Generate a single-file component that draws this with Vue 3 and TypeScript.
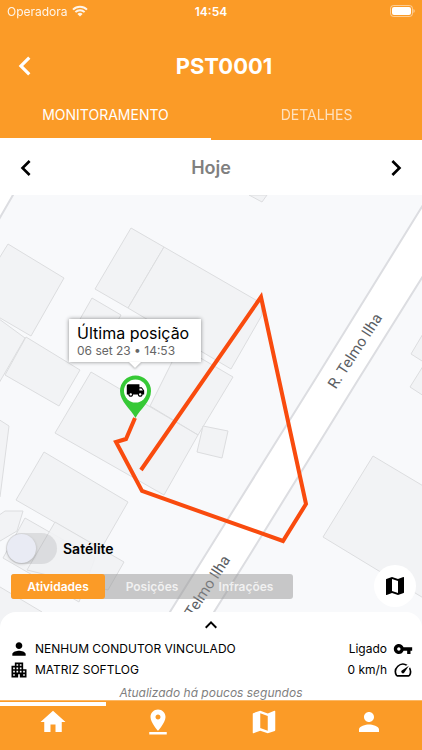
<script setup lang="ts">
import { ref } from 'vue'

const icons = {
  back: 'M15.41 7.41 14 6l-6 6 6 6 1.41-1.41L10.83 12z',
  forward: 'M10 6 8.59 7.41 13.17 12l-4.58 4.59L10 18l6-6z',
  up: 'm12 8-6 6 1.41 1.41L12 10.83l4.59 4.58L18 14z',
  person:
    'M12 12c2.21 0 4-1.79 4-4s-1.79-4-4-4-4 1.79-4 4 1.79 4 4 4zm0 2c-2.67 0-8 1.34-8 4v2h16v-2c0-2.66-5.33-4-8-4z',
  home: 'M10 20v-6h4v6h5v-8h3L12 3 2 12h3v8z',
  map: 'M15 19l-6-2.11V5l6 2.11M20.5 3h-.16L15 5.1 9 3 3.36 4.9c-.21.07-.36.25-.36.48V20.5a.5.5 0 0 0 .5.5c.05 0 .11 0 .16-.03L9 18.9l6 2.1 5.64-1.9c.21-.1.36-.25.36-.48V3.5a.5.5 0 0 0-.5-.5z',
  pin: 'M18 8c0-3.31-2.69-6-6-6S6 4.69 6 8c0 4.5 6 11 6 11s6-6.5 6-11zm-8 0c0-1.1.9-2 2-2s2 .9 2 2-.89 2-2 2c-1.1 0-2-.9-2-2zM5 20v2h14v-2H5z',
  building:
    'M17 11V3H7v4H3v14h8v-4h2v4h8V11h-4zM7 19H5v-2h2v2zm0-4H5v-2h2v2zm0-4H5V9h2v2zm4 4H9v-2h2v2zm0-4H9V9h2v2zm0-4H9V5h2v2zm4 8h-2v-2h2v2zm0-4h-2V9h2v2zm0-4h-2V5h2v2zm4 12h-2v-2h2v2zm0-4h-2v-2h2v2z',
  key: 'M12.65 10C11.83 7.67 9.61 6 7 6c-3.31 0-6 2.69-6 6s2.69 6 6 6c2.61 0 4.83-1.67 5.65-4H17v4h4v-4h2v-4H12.65zM7 14c-1.1 0-2-.9-2-2s.9-2 2-2 2 .9 2 2-.9 2-2 2z',
  speed:
    'M20.38 8.57l-1.23 1.85a8 8 0 0 1-.22 7.58H5.07A8 8 0 0 1 15.58 6.85l1.85-1.23A10 10 0 0 0 3.35 19a2 2 0 0 0 1.72 1h13.85a2 2 0 0 0 1.74-1 10 10 0 0 0-.27-10.44zm-9.79 6.84a2 2 0 0 0 2.83 0l5.66-8.49-8.49 5.66a2 2 0 0 0 0 2.83z',
  truck:
    'M20 8h-3V4H3c-1.1 0-2 .9-2 2v11h2c0 1.66 1.34 3 3 3s3-1.34 3-3h6c0 1.66 1.34 3 3 3s3-1.34 3-3h2v-5l-3-4zM6 18.5c-.83 0-1.5-.67-1.5-1.5s.67-1.5 1.5-1.5 1.5.67 1.5 1.5-.67 1.5-1.5 1.5zm13.5-9l1.96 2.5H17V9.5h2.5zm-1.5 9c-.83 0-1.5-.67-1.5-1.5s.67-1.5 1.5-1.5 1.5.67 1.5 1.5-.67 1.5-1.5 1.5z',
}

const tabs = ['MONITORAMENTO', 'DETALHES']
const activeTab = ref(0)

const filters = ['Atividades', 'Posições', 'Infrações']
const activeFilter = ref(0)

const satellite = ref(false)

const navItems = [
  { label: 'Início', icon: icons.home },
  { label: 'Posição', icon: icons.pin },
  { label: 'Mapa', icon: icons.map },
  { label: 'Perfil', icon: icons.person },
]
const activeNav = ref(0)

const buildings: string[] = [
  '249,195 262,202 267,195',
  '8,244 64,278 31,336 -5,315 -5,265',
  '131,228 164,247 128,308 95,289',
  '164,247 261,303 262,315 231,369 128,308',
  '92,298 121,315 100,352 71,335',
  '-5,316 25,338 -5,390',
  '26,337 80,370 59,406 5,375',
  '180,346 233,377 198,435 150,406',
  '91,372 198,435 164,495 55,433',
  '203,426 228,431 222,458 197,452',
  '-5,417 9,426 0,497 -5,500',
  '44,452 128,502 101,549 16,500',
  '5,511 23,511 17,531 -5,544 -5,518',
  '25,518 95,558 79,602 3,558',
  '55,522 124,562 108,590 27,570',
  '-5,584 42,612 60,640 -5,640',
  '373,456 430,490 430,602 323,537',
  '430,322 411,354 430,366',
  '430,355 410,387 430,400',
]
</script>

<template>
  <div class="screen">
    <header class="header">
      <div class="status">
        <div class="carrier">
          <span>Operadora</span>
          <svg class="wifi" viewBox="0 0 16 12" aria-hidden="true">
            <path d="M1 4.6a10 10 0 0 1 14 0M3.4 7.1a6.6 6.6 0 0 1 9.2 0" />
            <path class="wifi-dot" d="M8 11.6 5.4 9a3.7 3.7 0 0 1 5.2 0z" />
          </svg>
        </div>
        <time class="clock">14:54</time>
        <svg class="battery" viewBox="0 0 25 12" aria-hidden="true">
          <rect class="battery-case" x="0.5" y="0.5" width="22" height="11" rx="3" />
          <rect x="2" y="2" width="19" height="8" rx="2" />
          <path class="battery-cap" d="M23.500 4v4q1.200-.6 1.200-2t-1.200-2z" />
        </svg>
      </div>
      <div class="title-row">
        <button class="icon-button" type="button" aria-label="Voltar">
          <svg class="icon icon-xl" viewBox="0 0 24 24"><path :d="icons.back" /></svg>
        </button>
        <h1>PST0001</h1>
      </div>
      <nav class="tabs">
        <button
          v-for="(tab, i) in tabs"
          :key="tab"
          type="button"
          :class="{ active: i === activeTab }"
          @click="activeTab = i"
        >
          {{ tab }}
        </button>
      </nav>
    </header>

    <div class="date-bar">
      <button class="icon-button" type="button" aria-label="Dia anterior">
        <svg class="icon icon-lg" viewBox="0 0 24 24"><path :d="icons.back" /></svg>
      </button>
      <h2>Hoje</h2>
      <button class="icon-button" type="button" aria-label="Próximo dia">
        <svg class="icon icon-lg" viewBox="0 0 24 24"><path :d="icons.forward" /></svg>
      </button>
    </div>

    <main class="map">
      <svg class="canvas" viewBox="0 195 422 433" preserveAspectRatio="xMidYMid slice">
        <path class="road" d="M-10 235 13 195-10 175z" />
        <polygon v-for="points in buildings" :key="points" class="building" :points="points" />
        <path class="road" d="M428 197 316 378 211 546 155 636 199 636 251 553 358 380 428 268z" />
        <text class="street" transform="translate(355 351) rotate(-57)" dy="5">R. Telmo Ilha</text>
        <text class="street" transform="translate(203 593) rotate(-57)" dy="5">R. Telmo Ilha</text>
        <polyline
          class="route"
          points="135,418 126,439 116,442 142,491 283,541 306,504 261,297 141,470"
        />
        <path
          class="pin"
          d="M135.500 418C131 409 120 402 120 391a15.500 15.500 0 0 1 31 0C151 402 140 409 135.500 418z"
        />
        <circle class="pin-hole" cx="135.500" cy="391" r="11.500" />
        <path transform="translate(126 381) scale(.79)" :d="icons.truck" />
      </svg>

      <div class="callout">
        <strong>Última posição</strong>
        <span>06 set 23 • 14:53</span>
      </div>

      <div class="controls">
        <label class="satellite">
          <input v-model="satellite" type="checkbox" role="switch" />
          <span>Satélite</span>
        </label>
        <div class="filters">
          <button
            v-for="(filter, i) in filters"
            :key="filter"
            type="button"
            :class="{ active: i === activeFilter }"
            @click="activeFilter = i"
          >
            {{ filter }}
          </button>
        </div>
      </div>
      <button class="fab" type="button" aria-label="Tipo de mapa">
        <svg class="icon icon-md" viewBox="0 0 24 24"><path :d="icons.map" /></svg>
      </button>
    </main>

    <section class="sheet">
      <button class="expand" type="button" aria-label="Expandir">
        <svg class="icon icon-md" viewBox="0 0 24 24"><path :d="icons.up" /></svg>
      </button>
      <div class="info">
        <div class="entry">
          <svg class="icon icon-sm" viewBox="0 0 24 24"><path :d="icons.person" /></svg>
          <span>NENHUM CONDUTOR VINCULADO</span>
        </div>
        <div class="entry">
          <span>Ligado</span>
          <svg class="icon icon-sm" viewBox="0 0 24 24"><path :d="icons.key" /></svg>
        </div>
      </div>
      <div class="info">
        <div class="entry">
          <svg class="icon icon-sm" viewBox="0 0 24 24"><path :d="icons.building" /></svg>
          <span>MATRIZ SOFTLOG</span>
        </div>
        <div class="entry">
          <span>0 km/h</span>
          <svg class="icon icon-sm" viewBox="0 0 24 24"><path :d="icons.speed" /></svg>
        </div>
      </div>
      <p class="updated">Atualizado há poucos segundos</p>
    </section>

    <nav class="bottom-nav">
      <button
        v-for="(item, i) in navItems"
        :key="item.label"
        type="button"
        :aria-label="item.label"
        :class="{ active: i === activeNav }"
        @click="activeNav = i"
      >
        <svg class="icon icon-nav" viewBox="0 0 24 24"><path :d="item.icon" /></svg>
      </button>
    </nav>
  </div>
</template>

<style>
body {
  margin: 0;
}
</style>

<style scoped>
.screen {
  display: flex;
  flex-direction: column;
  min-height: 100vh;
  background: #fff;
  color: #000;
  font-family: Inter, "Liberation Sans", sans-serif;
}

button {
  margin: 0;
  padding: 0;
  border: 0;
  background: none;
  color: inherit;
  font: inherit;
  cursor: pointer;
}

h1,
h2,
p {
  margin: 0;
}

.icon {
  display: block;
  flex: none;
  fill: currentColor;
}
.icon-sm {
  width: 20px;
  height: 20px;
}
.icon-md {
  width: 24px;
  height: 24px;
}
.icon-nav {
  width: 30px;
  height: 30px;
}
.icon-lg {
  width: 32px;
  height: 32px;
}
.icon-xl {
  width: 38px;
  height: 38px;
}

.header {
  background: #fb9b27;
  color: #fff;
}

.status {
  display: grid;
  grid-template-columns: 1fr auto 1fr;
  align-items: center;
  height: 22px;
  padding: 0 7px;
  box-sizing: border-box;
  font-size: 12px;
}
.carrier {
  display: flex;
  align-items: center;
  gap: 4px;
  opacity: 0.9;
}
.wifi {
  width: 16px;
  height: 12px;
  fill: none;
  stroke: #fff;
  stroke-width: 2;
}
.wifi .wifi-dot {
  fill: #fff;
  stroke: none;
}
.clock {
  font-weight: 600;
}
.battery {
  justify-self: end;
  width: 25px;
  height: 12px;
  fill: #fff;
}
.battery-case {
  fill: none;
  stroke: #fff;
  opacity: 0.5;
}
.battery-cap {
  opacity: 0.6;
}

.title-row {
  display: grid;
  grid-template-columns: 38px 1fr 12px;
  align-items: center;
  height: 68px;
  padding: 20px 6px 0;
  box-sizing: border-box;
}
.title-row h1 {
  font-size: 22px;
  font-weight: 700;
  line-height: 28px;
  text-align: center;
}

.tabs {
  display: flex;
}
.tabs button {
  flex: 1;
  height: 50px;
  border-bottom: 2px solid transparent;
  font-size: 14px;
  opacity: 0.7;
}
.tabs .active {
  border-color: #fff;
  opacity: 1;
}

.date-bar {
  display: flex;
  align-items: center;
  justify-content: space-between;
  height: 55px;
  padding: 0 10px;
}
.date-bar h2 {
  color: #808080;
  font-size: 18px;
  font-weight: 600;
}

.map {
  position: relative;
  display: flex;
  flex: 1;
  align-items: flex-end;
  justify-content: space-between;
  min-height: 400px;
  padding: 0 6px 29px;
  box-sizing: border-box;
  background: #f8f9fb;
}
.canvas {
  position: absolute;
  inset: 0;
  width: 100%;
  height: 100%;
}
.building {
  fill: #f1f2f4;
  fill-opacity: 0.9;
  stroke: #dcdddf;
  stroke-width: 1;
}
.road {
  fill: #fff;
  stroke: #dcdde1;
  stroke-width: 2;
}
.street {
  fill: #5b5e63;
  stroke: #fff;
  stroke-width: 2;
  paint-order: stroke;
  font-family: Roboto, Inter, sans-serif;
  font-size: 15px;
  font-weight: 400;
  text-anchor: middle;
}
.route {
  fill: none;
  stroke: #f94b0e;
  stroke-width: 4;
}
.pin {
  fill: #36c936;
}
.pin-hole {
  fill: #fff;
}

.callout {
  position: absolute;
  bottom: calc(50% + 50px);
  left: calc(50% - 76px);
  display: flex;
  flex-direction: column;
  padding: 4px 8px;
  width: 116px;
  transform: translateX(-50%);
  background: #fff;
  box-shadow: 0 0 4px rgba(0, 0, 0, 0.45);
  white-space: nowrap;
}
.callout::after {
  content: "";
  position: absolute;
  top: 100%;
  left: 50%;
  margin-left: -6px;
  border: 6px solid transparent;
  border-top-color: #fff;
  border-bottom: 0;
  filter: drop-shadow(0 1px 1px rgba(0, 0, 0, 0.3));
}
.callout strong {
  font-size: 16px;
  font-weight: 400;
  line-height: 20px;
}
.callout span {
  color: #666;
  font-size: 12px;
  line-height: 15px;
}

.controls {
  position: relative;
  display: flex;
  flex-direction: column;
  gap: 10px;
}
.satellite {
  display: flex;
  align-items: center;
  gap: 6px;
  font-size: 14px;
  font-weight: 600;
}
.satellite input {
  width: 51px;
  height: 31px;
  margin: 0;
  padding: 1px;
  box-sizing: border-box;
  border-radius: 16px;
  appearance: none;
  background: rgba(120, 120, 128, 0.18);
}
.satellite input::before {
  content: "";
  display: block;
  width: 29px;
  height: 29px;
  border-radius: 50%;
  background: #e9ebf4;
  box-shadow: 0 1px 3px rgba(0, 0, 0, 0.2);
}
.satellite input:checked {
  background: #fb9b27;
}
.satellite input:checked::before {
  margin-left: 20px;
}
.filters {
  display: flex;
  margin-left: 5px;
  border-radius: 3px;
  background: rgba(150, 150, 150, 0.5);
}
.filters button {
  width: 94px;
  height: 25px;
  border-radius: 3px;
  color: rgba(255, 255, 255, 0.75);
  font-size: 12px;
  font-weight: 600;
}
.filters .active {
  background: #fb9b27;
  color: #fff;
}

.fab {
  position: relative;
  display: grid;
  place-items: center;
  width: 42px;
  height: 42px;
  margin-bottom: -8px;
  border-radius: 50%;
  background: #fff;
}

.sheet {
  position: relative;
  display: flex;
  flex-direction: column;
  margin-top: -16px;
  padding: 0 9px;
  border-radius: 16px 16px 0 0;
  background: #fff;
  font-size: 12px;
}
.expand {
  align-self: center;
  height: 26px;
}
.info {
  display: flex;
  justify-content: space-between;
  height: 21px;
}
.entry {
  display: flex;
  align-items: center;
  gap: 6px;
}
.updated {
  padding-top: 6px;
  color: #808080;
  font-style: italic;
  line-height: 14px;
  text-align: center;
}

.bottom-nav {
  display: flex;
  height: 50px;
  padding-top: 1px;
  border-top: 1px solid #fcb866;
  box-sizing: border-box;
  background: #fb9b27;
  color: #fff;
}
.bottom-nav button {
  display: grid;
  flex: 1;
  place-items: center;
  border-top: 4px solid transparent;
  border-bottom: 12px solid transparent;
}
.bottom-nav .active {
  border-top-color: #fff;
}
</style>
